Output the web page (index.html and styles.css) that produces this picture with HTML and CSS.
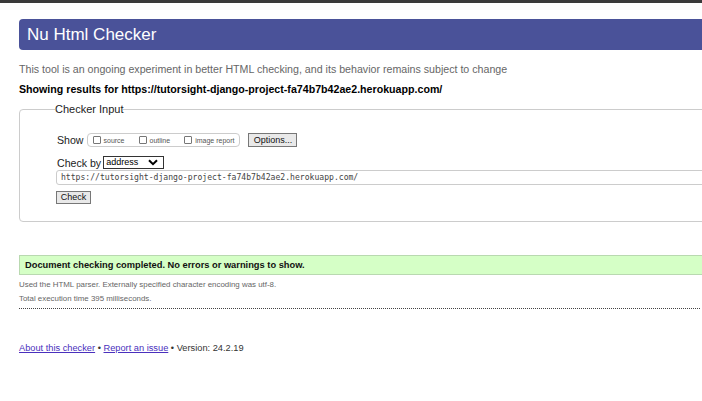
FILE: index.html
```html
<!DOCTYPE html>
<html>
<head>
<meta charset="utf-8">
<link rel="stylesheet" href="styles.css">
</head>
<body>
<div class="topbar"></div>
<div class="page">
  <h1 class="title">Nu Html Checker</h1>
  <p class="intro">This tool is an ongoing experiment in better HTML checking, and its behavior remains subject to change</p>
  <p class="showing">Showing results for https://tutorsight-django-project-fa74b7b42ae2.herokuapp.com/</p>
  <fieldset class="checker">
    <legend class="legend">Checker Input</legend>
    <div class="row show-row">
      <span class="lbl">Show</span>
      <fieldset class="opts">
        <label class="opt"><span class="cb"></span>source</label>
        <label class="opt"><span class="cb"></span>outline</label>
        <label class="opt"><span class="cb"></span>image report</label>
      </fieldset>
      <span class="btn options">Options...</span>
    </div>
    <div class="row by-row">
      <span class="lbl">Check by</span>
      <span class="select">address<svg class="chev" width="10" height="7" viewBox="0 0 10 7"><path d="M1 1.2 L5 5.2 L9 1.2" fill="none" stroke="#000" stroke-width="2"/></svg></span>
    </div>
    <div class="url">https://tutorsight-django-project-fa74b7b42ae2.herokuapp.com/</div>
    <span class="btn check">Check</span>
  </fieldset>
  <div class="success">Document checking completed. No errors or warnings to show.</div>
  <p class="meta">Used the HTML parser. Externally specified character encoding was utf-8.</p>
  <p class="meta">Total execution time 395 milliseconds.</p>
  <div class="dots"></div>
  <p class="footer"><a href="#">About this checker</a> • <a href="#">Report an issue</a> • Version: 24.2.19</p>
</div>
</body>
</html>
```
FILE: styles.css
```css
html, body { margin: 0; padding: 0; overflow: hidden; background: #fff; }
body { font-family: "Liberation Sans", Arial, sans-serif; color: #000; width: 702px; height: 401px; }
.topbar { height: 3px; background: #3a3a3a; }
.page { padding: 16px 0 0 19px; width: 740px; }
.title {
  margin: 0; height: 31px; box-sizing: border-box;
  background: #4a5299; color: #fff; font-weight: normal;
  font-size: 17px; line-height: 31px; padding-left: 8px;
  border-radius: 4px 0 0 4px;
}
.intro { margin: 12px 0 0; font-size: 10.65px; color: #666; line-height: 14px; }
.showing { margin: 6px 0 0; font-size: 10.65px; font-weight: bold; line-height: 14px; }
.checker {
  margin: 7px 0 0; padding: 0 0 17px 36px; border: 1px solid #ccc; border-radius: 4px;
  width: 700px; box-sizing: border-box; min-width: 0;
}
.legend { font-size: 11px; padding: 0; margin-left: -1px; line-height: 12px; color: #222; }
.row { display: flex; align-items: center; }
.show-row { margin-top: 18px; margin-left: 1px; }
.lbl { font-size: 10.6px; color: #222; }
.opts {
  display: flex; align-items: center; gap: 14px; margin: 0 0 0 3px; padding: 0 5px 0 5px;
  border: 1px solid #ccc; border-radius: 4px; height: 14px; box-sizing: border-box; min-width: 0;
}
.opt { font-size: 7px; color: #555; display: flex; align-items: center; }
.cb { border: 1px solid #777; border-radius: 1px; margin-right: 3px; display: inline-block; box-sizing: border-box; width: 8px; height: 8px; }
.btn {
  display: inline-block; box-sizing: border-box; background: #e9e9e9; border: 1px solid #777;
  font-size: 9px; color: #111; line-height: 11px; padding: 0 3px;
}
.options { margin-left: 8px; height: 14px; line-height: 12px; width: 49px; text-align: center; }
.by-row { margin-top: 9px; margin-left: 1px; }
.select {
  margin-left: 2px; box-sizing: border-box; width: 61px; height: 13px; border: 1px solid #333;
  font-size: 9px; line-height: 11px; padding-left: 2px; display: flex; align-items: center; justify-content: space-between; padding-right: 5px;
}
.url {
  margin: 1px 0 0 0; height: 15px; box-sizing: border-box; border: 1px solid #ccc; border-radius: 3px;
  font-family: "DejaVu Sans Mono", "Liberation Mono", monospace; font-size: 8.1px; color: #444; line-height: 13px; padding-left: 4px;
}
.check { margin: 6px 0 0 0; height: 13px; width: 35px; line-height: 11px; font-size: 9px; text-align: center; }
.success {
  margin-top: 33px; height: 20px; box-sizing: border-box; background: #d5ffc6;
  border-top: 1px solid #b9d9b0; border-bottom: 1px solid #b9d9b0; border-left: 1px solid #b9d9b0;
  font-size: 9.3px; font-weight: bold; line-height: 18px; padding-left: 5px; color: #111;
}
.meta { margin: 4px 0 0; font-size: 7.9px; color: #666; line-height: 11px; }
.meta + .meta { margin-top: 3px; }
.dots { margin-top: 4px; width: 681px; border-top: 1px dotted #444; }
.footer { margin: 34px 0 0; font-size: 9.25px; color: #333; }
.footer a { color: #4a30bd; }
```
